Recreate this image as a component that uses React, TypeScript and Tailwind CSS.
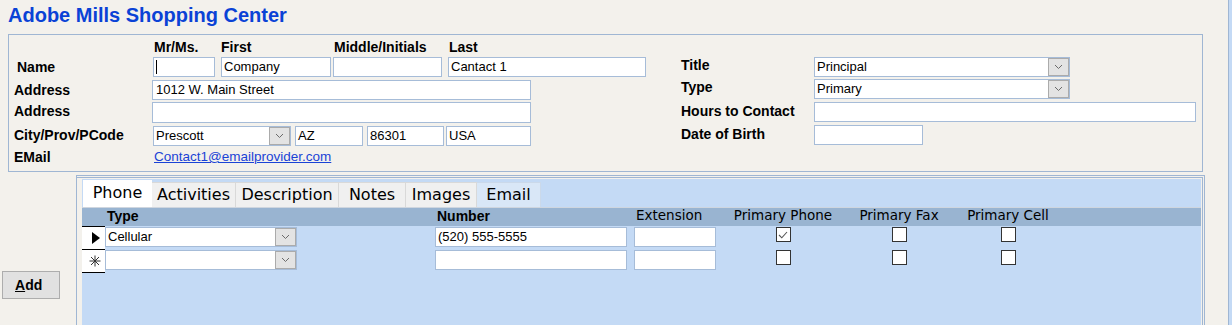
import React from "react";

function Chevron() {
  return (
    <svg width="9" height="6" viewBox="0 0 9 6">
      <path d="M1 1 L4.5 4.5 L8 1" fill="none" stroke="#6b6b6b" strokeWidth="1" />
    </svg>
  );
}

function Input({ className = "", children }: { className?: string; children?: React.ReactNode }) {
  return (
    <div
      className={`h-[20px] bg-white border border-[#a6bcd8] flex items-center pl-[2px] pb-[1px] text-[13px] leading-none text-black whitespace-nowrap overflow-hidden ${className}`}
    >
      {children}
    </div>
  );
}

function Combo({ className = "", text = "" }: { className?: string; text?: string }) {
  return (
    <div className={`h-[20px] bg-white border border-[#a6bcd8] flex items-stretch ${className}`}>
      <div className="flex-1 flex items-center pl-[2px] pb-[1px] text-[13px] leading-none text-black whitespace-nowrap overflow-hidden">
        {text}
      </div>
      <div className="w-[21px] bg-[#e3e3e3] border border-[#ababab] flex items-center justify-center">
        <Chevron />
      </div>
    </div>
  );
}

function Check({ checked = false }: { checked?: boolean }) {
  return (
    <div className="w-[15px] h-[15px] bg-white border border-[#333333] flex items-center justify-center">
      {checked && (
        <svg width="10" height="8" viewBox="0 0 10 8">
          <path d="M1 4 L3.8 6.8 L9 1" fill="none" stroke="#555555" strokeWidth="1.1" />
        </svg>
      )}
    </div>
  );
}

function Label({ className = "", children }: { className?: string; children: React.ReactNode }) {
  return <div className={`text-[14px] font-bold leading-[16px] text-black whitespace-nowrap ${className}`}>{children}</div>;
}

export default function App() {
  return (
    <div className="w-[1232px] h-[325px] overflow-hidden flex bg-[#f3f1ec] font-['Liberation_Sans',Arial,sans-serif] text-black">
      <div className="w-[1228px] h-full flex flex-col">
        {/* Title */}
        <div className="h-[34px] pl-[8px] pt-[3px] text-[20px] leading-[24px] font-bold text-[#0a42d6] whitespace-nowrap">
          Adobe Mills Shopping Center
        </div>

        {/* Contact box */}
        <div className="ml-[8px] w-[1195px] h-[138px] border border-[#9fb6d3] flex">
          {/* left column */}
          <div className="w-[672px] flex flex-col pt-[2px]">
            {/* column headers */}
            <div className="h-[20px] flex items-center">
              <div className="w-[143px]" />
              <Label className="ml-[1px] w-[62px] pl-[1px]">Mr/Ms.</Label>
              <Label className="ml-[6px] w-[110px]">First</Label>
              <Label className="ml-[2px] w-[109px] pl-[1px]">Middle/Initials</Label>
              <Label className="ml-[6px] w-[198px] pl-[1px]">Last</Label>
            </div>
            {/* Name */}
            <div className="h-[20px] flex items-center">
              <Label className="w-[143px] pl-[8px]">Name</Label>
              <Input className="ml-[1px] w-[62px]">
                <div className="w-[1px] h-[14px] bg-black mt-[1px]" />
              </Input>
              <Input className="ml-[6px] w-[110px]">Company</Input>
              <Input className="ml-[2px] w-[109px]" />
              <Input className="ml-[6px] w-[198px]">Cantact 1</Input>
            </div>
            {/* Address */}
            <div className="mt-[3px] h-[20px] flex items-center">
              <Label className="w-[143px] pl-[5px] -mt-[1px]">Address</Label>
              <Input className="w-[379px] pl-[3px]">1012 W. Main Street</Input>
            </div>
            {/* Address 2 */}
            <div className="mt-[2px] h-[21px] flex items-center">
              <Label className="w-[143px] pl-[5px] -mt-[3px]">Address</Label>
              <Input className="w-[379px] h-[21px]" />
            </div>
            {/* City */}
            <div className="mt-[3px] h-[20px] flex items-center">
              <Label className="w-[143px] pl-[5px] -mt-[2px]">City/Prov/PCode</Label>
              <Combo className="ml-[1px] w-[138px]" text="Prescott" />
              <Input className="ml-[4px] w-[68px]">AZ</Input>
              <Input className="ml-[4px] w-[77px]">86301</Input>
              <Input className="ml-[2px] w-[85px]">USA</Input>
            </div>
            {/* Email */}
            <div className="mt-[3px] h-[16px] flex items-center">
              <Label className="w-[143px] pl-[5px]">EMail</Label>
              <span className="ml-[2px] text-[13.5px] leading-[16px] text-[#1a43d6] underline">
                Contact1@emailprovider.com
              </span>
            </div>
          </div>

          {/* right column */}
          <div className="flex-1 flex flex-col pt-[22px]">
            <div className="h-[20px] flex items-start">
              <Label className="w-[133px]">Title</Label>
              <Combo className="w-[256px]" text="Principal" />
            </div>
            <div className="mt-[2px] h-[20px] flex items-start">
              <Label className="w-[133px]">Type</Label>
              <Combo className="w-[256px]" text="Primary" />
            </div>
            <div className="mt-[3px] h-[20px] flex items-start">
              <Label className="w-[133px] mt-[1px]">Hours to Contact</Label>
              <Input className="w-[382px]" />
            </div>
            <div className="mt-[3px] h-[20px] flex items-start">
              <Label className="w-[133px] mt-[1px]">Date of Birth</Label>
              <Input className="w-[109px]" />
            </div>
          </div>
        </div>

        {/* Bottom area */}
        <div className="mt-[3px] flex-1 flex">
          <div className="w-[76px] pl-[2px] pt-[96px]">
            <button className="w-[58px] h-[28px] bg-[#e1e1e1] border border-[#adadad] flex items-center pl-[12px] text-[14px] font-bold leading-none text-black">
              <span className="underline">A</span>dd
            </button>
          </div>

          <div className="w-[1129px] h-full border-t border-l border-r border-[#9fb6d3] pt-[1px] pr-[1px]">
            <div className="h-full border-t border-r border-[#9fb6d3] pt-[1px] pr-[1px] pl-[5px]">
              <div className="h-full bg-[#c4daf5] flex flex-col">
                {/* Tabs */}
                <div className="h-[28px] flex items-end pl-[1px] font-['DejaVu_Sans',sans-serif] text-[16px] leading-none text-black">
                  <div className="w-[69px] h-[27px] bg-white flex items-center justify-center pb-[1px]">Phone</div>
                  <div className="w-[84px] h-[25px] bg-[#f0f0f0] border-t border-r border-[#d9d9d9] flex items-center justify-center">
                    Activities
                  </div>
                  <div className="w-[103px] h-[25px] bg-[#f0f0f0] border-t border-r border-[#d9d9d9] flex items-center justify-center">
                    Description
                  </div>
                  <div className="w-[67px] h-[25px] bg-[#f0f0f0] border-t border-r border-[#d9d9d9] flex items-center justify-center">
                    Notes
                  </div>
                  <div className="w-[71px] h-[25px] bg-[#f0f0f0] border-t border-r border-[#d9d9d9] flex items-center justify-center">
                    Images
                  </div>
                  <div className="w-[64px] h-[25px] bg-[#d9e7f7] border-t border-r border-[#cbd9ea] flex items-center justify-center">
                    Email
                  </div>
                </div>

                {/* Header row */}
                <div className="h-[19px] bg-[#99b4d1] border-t border-[#cfd6df] flex items-center pb-[3px] whitespace-nowrap">
                  <div className="w-[23px]" />
                  <div className="w-[330px] pl-[2px] text-[14px] font-bold leading-none">Type</div>
                  <div className="w-[199px] pl-[2px] text-[14px] font-bold leading-none">Number</div>
                  <div className="w-[86px] pl-[2px] font-['DejaVu_Sans',sans-serif] text-[13.5px] leading-none">Extension</div>
                  <div className="w-[126px] text-center font-['DejaVu_Sans',sans-serif] text-[13.5px] leading-none">Primary Phone</div>
                  <div className="w-[106px] text-center font-['DejaVu_Sans',sans-serif] text-[13.5px] leading-none">Primary Fax</div>
                  <div className="w-[112px] text-center font-['DejaVu_Sans',sans-serif] text-[13.5px] leading-none">Primary Cell</div>
                </div>

                {/* Row 1 */}
                <div className="h-[23px] flex items-start">
                  <div className="w-[23px] h-[23px] bg-white border-t border-black flex items-center pl-[10px]">
                    <svg width="8" height="12" viewBox="0 0 8 12">
                      <polygon points="0,0 8,6 0,12" fill="#000000" />
                    </svg>
                  </div>
                  <div className="w-[330px] pt-[1px]">
                    <Combo className="w-[192px]" text="Cellular" />
                  </div>
                  <div className="w-[199px] pt-[1px]">
                    <Input className="w-[192px]">(520) 555-5555</Input>
                  </div>
                  <div className="w-[86px] pt-[1px]">
                    <Input className="w-[82px]" />
                  </div>
                  <div className="w-[126px] pt-[1px] flex justify-center">
                    <Check checked />
                  </div>
                  <div className="w-[106px] pt-[1px] flex justify-center">
                    <Check />
                  </div>
                  <div className="w-[112px] pt-[1px] flex justify-center">
                    <Check />
                  </div>
                </div>

                {/* Row 2 */}
                <div className="h-[23px] flex items-start">
                  <div className="w-[23px] h-[24px] bg-white border-t border-b border-black flex items-center pl-[7px]">
                    <svg width="12" height="12" viewBox="0 0 12 12">
                      <g stroke="#333333" strokeWidth="1" fill="none">
                        <line x1="6" y1="0.5" x2="6" y2="11.5" />
                        <line x1="0.5" y1="6" x2="11.5" y2="6" />
                        <line x1="2" y1="2" x2="10" y2="10" />
                        <line x1="10" y1="2" x2="2" y2="10" />
                      </g>
                    </svg>
                  </div>
                  <div className="w-[330px] pt-[1px]">
                    <Combo className="w-[192px]" text="" />
                  </div>
                  <div className="w-[199px] pt-[1px]">
                    <Input className="w-[192px]" />
                  </div>
                  <div className="w-[86px] pt-[1px]">
                    <Input className="w-[82px]" />
                  </div>
                  <div className="w-[126px] pt-[1px] flex justify-center">
                    <Check />
                  </div>
                  <div className="w-[106px] pt-[1px] flex justify-center">
                    <Check />
                  </div>
                  <div className="w-[112px] pt-[1px] flex justify-center">
                    <Check />
                  </div>
                </div>
              </div>
            </div>
          </div>
        </div>
      </div>
      <div className="flex-1 h-full border-l border-[#9fb6d3] bg-[#c4daf5]" />
    </div>
  );
}
